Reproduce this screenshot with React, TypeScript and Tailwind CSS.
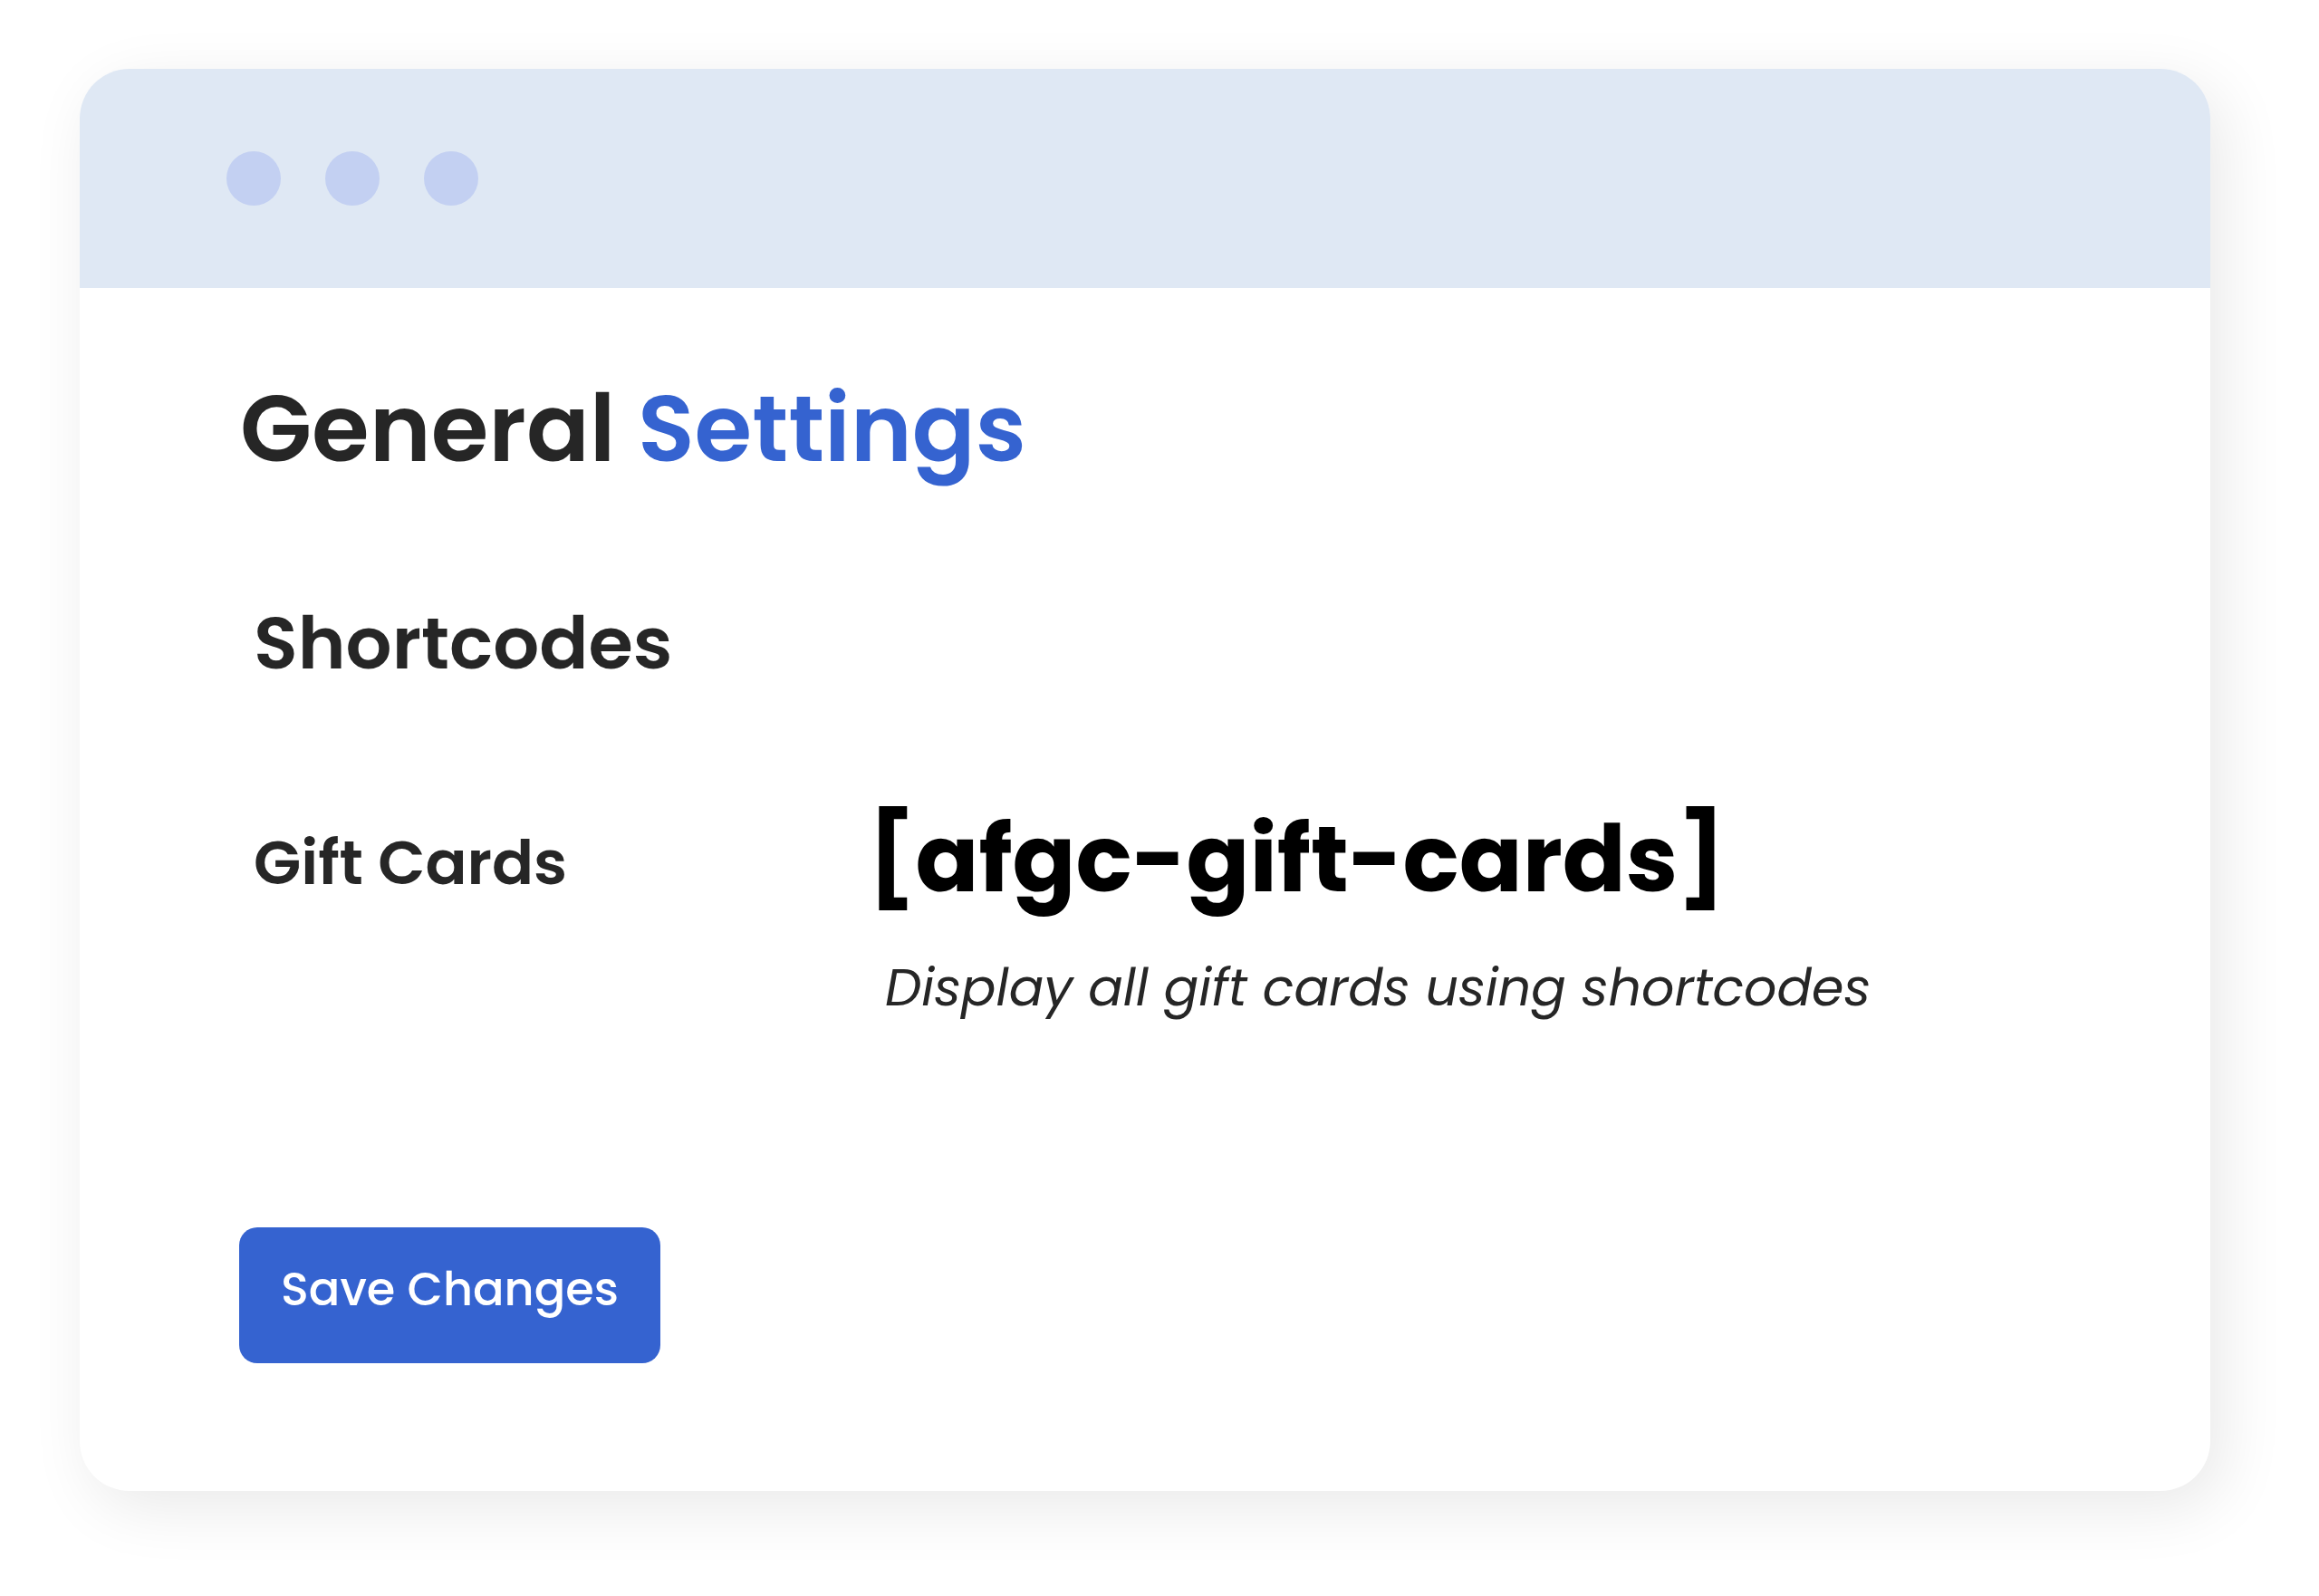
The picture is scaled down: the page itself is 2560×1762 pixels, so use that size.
const font = { fontFamily: "Poppins, Inter, 'Noto Sans', sans-serif" };

const Dot = () => <span className="block w-[60px] h-[60px] rounded-full bg-[#c3d0f2]" />;

export default function App() {
  return (
    <div className="w-[2560px] h-[1762px] bg-white pt-[76px] pl-[88px]" style={font}>
      <div className="w-[2352px] h-[1570px] rounded-[55px] bg-white overflow-hidden shadow-[14px_18px_70px_rgba(0,0,0,0.09)] flex flex-col">
        {/* window bar */}
        <div className="h-[242px] bg-[#dfe8f4] flex items-center pl-[162px] gap-[49px]">
          <Dot />
          <Dot />
          <Dot />
        </div>

        {/* content */}
        <div className="pl-[177px] flex flex-col">
          <h1 className="mt-[104px] text-[103px] leading-none font-semibold text-[#262626]">
            General <span className="text-[#3563d0]">Settings</span>
          </h1>

          <h2 className="mt-[145px] ml-[15px] text-[80px] leading-none font-semibold text-[#262626]">
            Shortcodes
          </h2>

          <div className="mt-[147px] ml-[15px] flex">
            <div className="w-[678px] pt-[22px] text-[68px] leading-none font-semibold text-[#262626]">
              Gift Cards
            </div>
            <div className="flex flex-col">
              <div className="text-[103px] leading-none font-bold text-black">[afgc-gift-cards]</div>
              <div className="mt-[62px] ml-[19px] text-[57px] leading-none italic text-[#262626]">
                Display all gift cards using shortcodes
              </div>
            </div>
          </div>

          <button className="mt-[236px] -ml-[1px] w-[465px] h-[150px] rounded-[20px] bg-[#3563d0] text-white text-[51px] font-medium leading-none pb-[14px] self-start">
            Save Changes
          </button>
        </div>
      </div>
    </div>
  );
}
